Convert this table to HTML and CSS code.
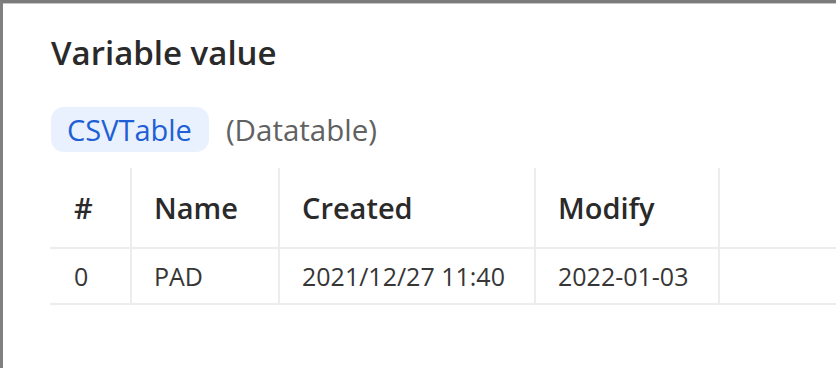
FILE: index.html
```html
<!DOCTYPE html>
<html>
<head>
<meta charset="utf-8">
<link rel="stylesheet" href="styles.css">
</head>
<body>
<div class="frame">
  <div class="panel">
    <h1 class="title">Variable value</h1>
    <div class="meta">
      <span class="chip">CSVTable</span>
      <span class="type">(Datatable)</span>
    </div>
    <table class="grid">
      <colgroup>
        <col class="c1"><col class="c2"><col class="c3"><col class="c4"><col class="c5">
      </colgroup>
      <thead>
        <tr><th>#</th><th>Name</th><th>Created</th><th>Modify</th><th></th></tr>
      </thead>
      <tbody>
        <tr><td>0</td><td>PAD</td><td>2021/12/27 11:40</td><td>2022-01-03</td><td></td></tr>
      </tbody>
    </table>
  </div>
</div>
</body>
</html>
```
FILE: styles.css
```css
html, body {
  margin: 0;
  padding: 0;
  background: #ffffff;
  overflow: hidden;
}
body {
  font-family: "Open Sans", "Noto Sans", sans-serif;
  color: #242424;
}
.frame {
  width: 836px;
  height: 368px;
  box-sizing: border-box;
  border-top: 3px solid #7b7b7b;
  border-left: 3px solid #808080;
  background: #ffffff;
  overflow: hidden;
}
.panel {
  border-top: 1px solid #c8c8c8;
  padding: 0 0 0 48px;
}
.title {
  margin: 0;
  padding-top: 27px;
  font-size: 33px;
  line-height: 44px;
  font-weight: 600;
  color: #2a2a2a;
}
.meta {
  display: flex;
  align-items: center;
  gap: 17px;
  margin-top: 32px;
}
.chip {
  background: #e8f1fd;
  color: #1f5fd6;
  border-radius: 13px;
  padding: 0 17px 0 16px;
  height: 45px;
  line-height: 45px;
  font-size: 29px;
}
.type {
  color: #616161;
  font-size: 29.5px;
  line-height: 45px;
}
.grid {
  margin-top: 16px;
  margin-left: -1px;
  border-collapse: collapse;
  table-layout: fixed;
  width: calc(100% + 1px);
}
.c1 { width: 81px; }
.c2 { width: 148px; }
.c3 { width: 256px; }
.c4 { width: 184px; }
.grid th, .grid td {
  text-align: left;
  padding: 0 0 0 22px;
  border-bottom: 2px solid #ececec;
  border-left: 2px solid #ececec;
  white-space: nowrap;
}
.grid th:first-child, .grid td:first-child {
  border-left: none;
  padding-left: 24px;
}
.grid th {
  height: 79px;
  font-size: 29px;
  font-weight: 600;
  color: #2a2a2a;
}
.grid td {
  height: 54px;
  font-size: 25px;
  color: #363636;
}
```
